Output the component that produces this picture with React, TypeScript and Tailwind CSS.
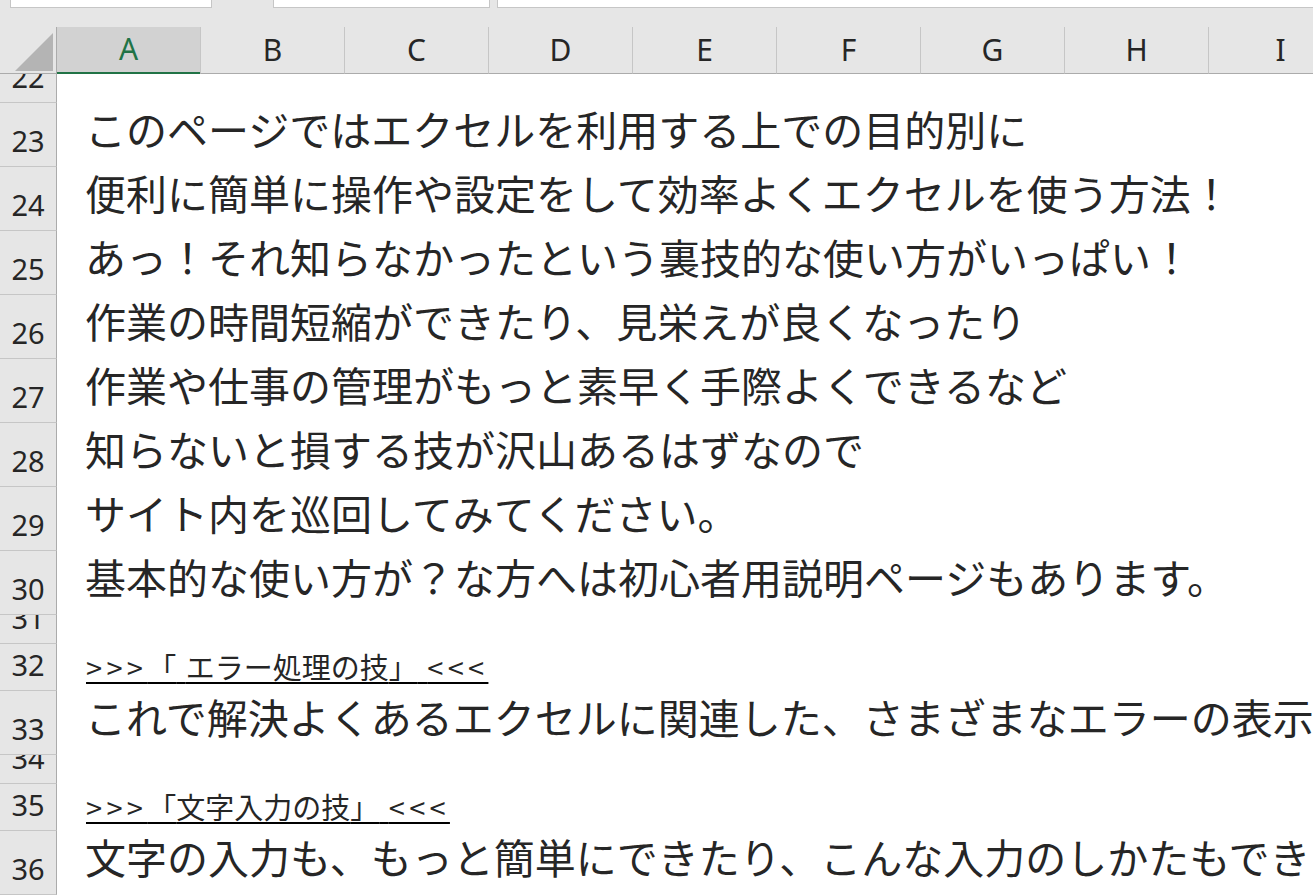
import React from 'react';

const COLS = ['A', 'B', 'C', 'D', 'E', 'F', 'G', 'H', 'I'];

type Row = {
  n: number;
  h: number;
  kind?: 'text' | 'link';
  text?: string;
  label?: string;
  gap?: boolean;
};

const ROWS: Row[] = [
  { n: 22, h: 29 },
  { n: 23, h: 64, kind: 'text', text: 'このページではエクセルを利用する上での目的別に' },
  { n: 24, h: 64, kind: 'text', text: '便利に簡単に操作や設定をして効率よくエクセルを使う方法！' },
  { n: 25, h: 64, kind: 'text', text: 'あっ！それ知らなかったという裏技的な使い方がいっぱい！' },
  { n: 26, h: 64, kind: 'text', text: '作業の時間短縮ができたり、見栄えが良くなったり' },
  { n: 27, h: 64, kind: 'text', text: '作業や仕事の管理がもっと素早く手際よくできるなど' },
  { n: 28, h: 64, kind: 'text', text: '知らないと損する技が沢山あるはずなので' },
  { n: 29, h: 64, kind: 'text', text: 'サイト内を巡回してみてください。' },
  { n: 30, h: 64, kind: 'text', text: '基本的な使い方が？な方へは初心者用説明ページもあります。' },
  { n: 31, h: 29 },
  { n: 32, h: 47, kind: 'link', label: 'エラー処理の技', gap: true },
  { n: 33, h: 64, kind: 'text', text: 'これで解決よくあるエクセルに関連した、さまざまなエラーの表示と対処方法' },
  { n: 34, h: 29 },
  { n: 35, h: 47, kind: 'link', label: '文字入力の技' },
  { n: 36, h: 64, kind: 'text', text: '文字の入力も、もっと簡単にできたり、こんな入力のしかたもできるんだ！' },
];

function TopStrip() {
  return (
    <div className="flex h-[27px] bg-[#e6e6e6]">
      <div className="ml-[10px] h-[8px] w-[202px] border-x border-b border-[#c6c6c6] bg-white" />
      <div className="ml-[61px] h-[8px] w-[217px] border-x border-b border-[#c6c6c6] bg-white" />
      <div className="ml-[7px] h-[8px] flex-1 border-l border-b border-[#c6c6c6] bg-white" />
    </div>
  );
}

function ColumnHeader() {
  return (
    <div className="flex h-[47px] bg-[#e6e6e6]">
      <div className="relative h-full w-[57px] shrink-0 border-r border-b border-[#ababab]">
        <svg className="absolute left-0 top-0" width="56" height="46" viewBox="0 0 56 46">
          <polygon points="53,6 53,44 15,44" fill="#b4b4b4" />
        </svg>
      </div>
      {COLS.map((c, i) =>
        i === 0 ? (
          <div
            key={c}
            className="flex h-full w-[143px] shrink-0 items-center justify-center border-b-[2px] border-[#217346] bg-[#d2d2d2] pb-[2px] text-[30px] text-[#217346]"
          >
            {c}
          </div>
        ) : (
          <div
            key={c}
            className="flex h-full w-[144px] shrink-0 items-center justify-center border-l border-b border-l-[#c6c6c6] border-b-[#ababab] pb-[2px] text-[30px] text-[#262626]"
          >
            {c}
          </div>
        )
      )}
    </div>
  );
}

function LinkText({ label, gap }: { label: string; gap?: boolean }) {
  return (
    <span className="pb-[10px] pl-[29px] text-[29px] leading-none text-[#262626] underline decoration-[#000] decoration-[1.5px] underline-offset-[3px] [font-family:'Noto_Sans_CJK_JP',sans-serif] whitespace-pre">
      <span className="tracking-[4.3px]">&gt;&gt;&gt;</span>
      「{gap && <span className="tracking-[3px]"> </span>}
      {label}」<span className="tracking-[3px]"> </span>
      <span className="tracking-[4.3px]">&lt;&lt;&lt;</span>
    </span>
  );
}

function SheetRow({ row }: { row: Row }) {
  return (
    <div className="flex" style={{ height: row.h }}>
      <div className="flex h-full w-[57px] shrink-0 items-end justify-center overflow-hidden border-r border-b border-r-[#ababab] border-b-[#c6c6c6] bg-[#e6e6e6] pb-[11px] text-[29px] leading-none text-[#262626]">
        <span>{row.n}</span>
      </div>
      <div className="flex h-full min-w-0 flex-1 items-end overflow-hidden whitespace-nowrap bg-white">
        {row.kind === 'text' && (
          <span className="pb-[18px] pl-[28px] text-[41px] leading-none text-[#262626] [font-family:'Noto_Sans_CJK_JP',sans-serif]">
            {row.text}
          </span>
        )}
        {row.kind === 'link' && row.label && <LinkText label={row.label} gap={row.gap} />}
      </div>
    </div>
  );
}

export default function App() {
  return (
    <div className="h-[896px] w-[1313px] overflow-hidden bg-white [font-family:'Noto_Sans','Noto_Sans_CJK_JP',sans-serif]">
      <TopStrip />
      <ColumnHeader />
      {ROWS.map((r) => (
        <SheetRow key={r.n} row={r} />
      ))}
    </div>
  );
}
